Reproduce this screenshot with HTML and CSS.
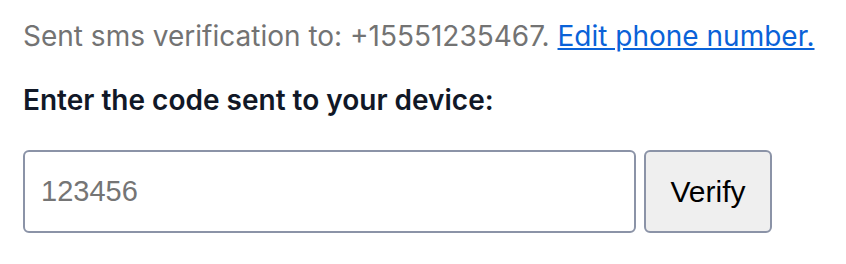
FILE: index.html
```html
<!DOCTYPE html>
<html lang="en">
  <head>
    <meta charset="UTF-8" />
    <meta name="viewport" content="width=device-width, initial-scale=1.0" />
    <title>Verify phone</title>
    <link rel="stylesheet" href="styles.css">
  </head>
  <body>
    <div class="verify">
      <p class="verify__sent">
        Sent sms verification to: +15551235467.
        <a href="#" class="verify__edit">Edit phone number.</a>
      </p>
      <label class="verify__label" for="code">Enter the code sent to your device:</label>
      <div class="verify__row">
        <input class="verify__input" id="code" type="text" placeholder="123456" />
        <button class="verify__btn" type="button">Verify</button>
      </div>
    </div>
  </body>
</html>
```

FILE: styles.css
```css
body {
  margin: 0;
  background: #fff;
}

.verify {
  padding: 16px 23px;
  font-family: Inter, "Noto Sans", sans-serif;
}

.verify__sent {
  margin: 0;
  font-size: 28px;
  line-height: 40px;
  color: #737373;
}

.verify__edit {
  color: #0a62d8;
}

.verify__label {
  display: block;
  margin-top: 24px;
  font-size: 28px;
  line-height: 40px;
  font-weight: 600;
  color: #111827;
}

.verify__row {
  display: flex;
  gap: 8px;
  margin-top: 30px;
}

.verify__input {
  box-sizing: border-box;
  width: 613px;
  height: 83px;
  padding: 0 16px;
  border: 2px solid #8b93a7;
  border-radius: 6px;
  font-family: "Liberation Sans", Arial, sans-serif;
  font-size: 29px;
  color: #111;
  outline: none;
}

.verify__input::placeholder {
  color: #757575;
}

.verify__btn {
  box-sizing: border-box;
  width: 128px;
  height: 83px;
  border: 2px solid #8b93a7;
  border-radius: 6px;
  background: #efefef;
  font-family: "Liberation Sans", Arial, sans-serif;
  font-size: 30px;
  color: #000;
}
```
